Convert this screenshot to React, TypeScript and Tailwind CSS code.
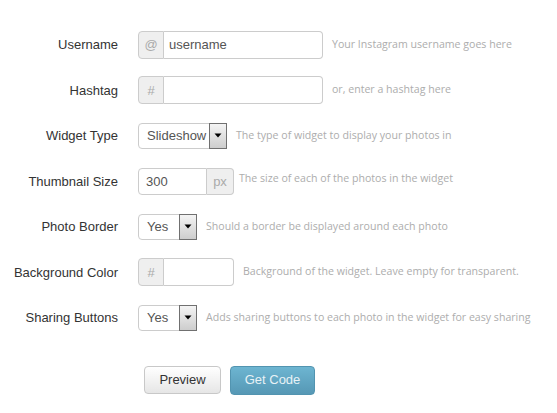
import React from "react";

const labelCls =
  "w-[118px] shrink-0 text-right text-[13px] text-[#333] pr-0 mr-[20px]";
const helpCls =
  "text-[10.6px] text-[#adadad] whitespace-nowrap [font-family:'Open_Sans',sans-serif]";

function Addon({ children, side }: { children: React.ReactNode; side: "l" | "r" }) {
  return (
    <div
      className={
        "flex h-full items-center justify-center bg-[#efefef] text-[13px] text-[#aaa] border-[#ccc] " +
        (side === "l"
          ? "w-[26px] border rounded-l-[4px]"
          : "w-[27px] border border-l-0 rounded-r-[4px]")
      }
    >
      {children}
    </div>
  );
}

function Select({ value, width }: { value: string; width: string }) {
  return (
    <div
      className={
        "flex h-[26px] items-stretch rounded-[4px] border border-[#ccc] bg-white " + width
      }
    >
      <div className="flex flex-1 items-center pl-[8px] text-[13px] text-[#555]">{value}</div>
      <div className="-mr-px -my-px flex w-[18px] items-center justify-center border border-[#707070] bg-gradient-to-b from-[#f4f4f4] to-[#cdcdcd]">
        <svg width="8" height="5" viewBox="0 0 8 5">
          <polygon points="0.5,0.5 7.5,0.5 4,4.5" fill="#000" />
        </svg>
      </div>
    </div>
  );
}

function Row({ label, children }: { label: string; children: React.ReactNode }) {
  return (
    <div className="flex h-[45.5px] items-center">
      <div className={labelCls}>{label}</div>
      {children}
    </div>
  );
}

export default function App() {
  return (
    <div className="w-[557px] h-[413px] bg-white [font-family:'Liberation_Sans',Arial,sans-serif] pt-[22px]">
      <Row label="Username">
        <div className="flex h-[28px] w-[185px]">
          <Addon side="l">@</Addon>
          <div className="flex flex-1 items-center rounded-r-[4px] border border-l-0 border-[#ccc] pl-[5px] text-[13px] text-[#555]">
            username
          </div>
        </div>
        <div className={helpCls + " ml-[9px]"}>Your Instagram username goes here</div>
      </Row>
      <Row label="Hashtag">
        <div className="flex h-[28px] w-[185px]">
          <Addon side="l">#</Addon>
          <div className="flex-1 rounded-r-[4px] border border-l-0 border-[#ccc]" />
        </div>
        <div className={helpCls + " ml-[9px]"}>or, enter a hashtag here</div>
      </Row>
      <Row label="Widget Type">
        <Select value="Slideshow" width="w-[89px]" />
        <div className={helpCls + " ml-[9px]"}>The type of widget to display your photos in</div>
      </Row>
      <Row label="Thumbnail Size">
        <div className="flex h-[27px] w-[96px]">
          <div className="flex flex-1 items-center rounded-l-[4px] border border-[#ccc] pl-[7px] text-[13px] text-[#555]">
            300
          </div>
          <Addon side="r">px</Addon>
        </div>
        <div className={helpCls + " ml-[5px] -mt-[5px]"}>The size of each of the photos in the widget</div>
      </Row>
      <Row label="Photo Border">
        <Select value="Yes" width="w-[59px]" />
        <div className={helpCls + " ml-[9px]"}>Should a border be displayed around each photo</div>
      </Row>
      <Row label="Background Color">
        <div className="flex h-[28px] w-[96px]">
          <Addon side="l">#</Addon>
          <div className="flex-1 rounded-r-[4px] border border-l-0 border-[#ccc]" />
        </div>
        <div className={helpCls + " ml-[9px]"}>Background of the widget. Leave empty for transparent.</div>
      </Row>
      <Row label="Sharing Buttons">
        <Select value="Yes" width="w-[59px]" />
        <div className={helpCls + " ml-[9px]"}>Adds sharing buttons to each photo in the widget for easy sharing</div>
      </Row>
      <div className="mt-[25px] flex items-center gap-[9px] pl-[144px]">
        <button className="flex h-[28px] w-[77px] items-center justify-center rounded-[4px] border border-[#c8c8c8] bg-gradient-to-b from-white to-[#e6e6e6] text-[13px] text-[#333]">
          Preview
        </button>
        <button className="flex h-[29px] w-[85px] items-center justify-center rounded-[4px] border border-[#5294b0] bg-gradient-to-b from-[#6db5d1] to-[#5698b5] text-[13px] text-[#e8f2f6]">
          Get Code
        </button>
      </div>
    </div>
  );
}
